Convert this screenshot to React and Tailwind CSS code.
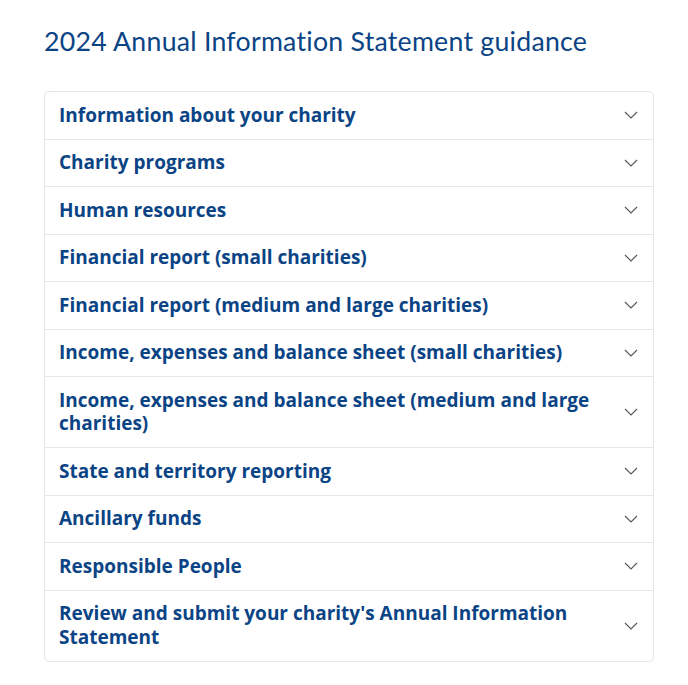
const items = [
  'Information about your charity',
  'Charity programs',
  'Human resources',
  'Financial report (small charities)',
  'Financial report (medium and large charities)',
  'Income, expenses and balance sheet (small charities)',
  'Income, expenses and balance sheet (medium and large charities)',
  'State and territory reporting',
  'Ancillary funds',
  'Responsible People',
  "Review and submit your charity's Annual Information Statement",
]

function Chevron() {
  return (
    <svg width="14" height="8" viewBox="0 0 14 8" fill="none" className="shrink-0">
      <path d="M1 1l6 6 6-6" stroke="#555" strokeWidth="1.1" />
    </svg>
  )
}

export default function App() {
  return (
    <div className="min-h-screen bg-white px-[44px] pt-[24px]">
      <h1 className="font-['Lato',sans-serif] text-[26.7px] leading-[34px] text-[#0b4485] tracking-[0.25px] mb-[33px]">
        2024 Annual Information Statement guidance
      </h1>
      <div className="w-[610px] border border-[#e3e6ea] rounded-[5px]">
        {items.map((t, i) => (
          <button
            key={i}
            className={`w-full flex items-center justify-between gap-4 pl-[14px] pr-[15px] py-[11.5px] text-left ${i > 0 ? 'border-t border-[#e3e6ea]' : ''}`}
          >
            <span className="font-['Open_Sans',sans-serif] text-[19px] leading-[23.5px] font-bold text-[#0b4485]">{t}</span>
            <Chevron />
          </button>
        ))}
      </div>
    </div>
  )
}
